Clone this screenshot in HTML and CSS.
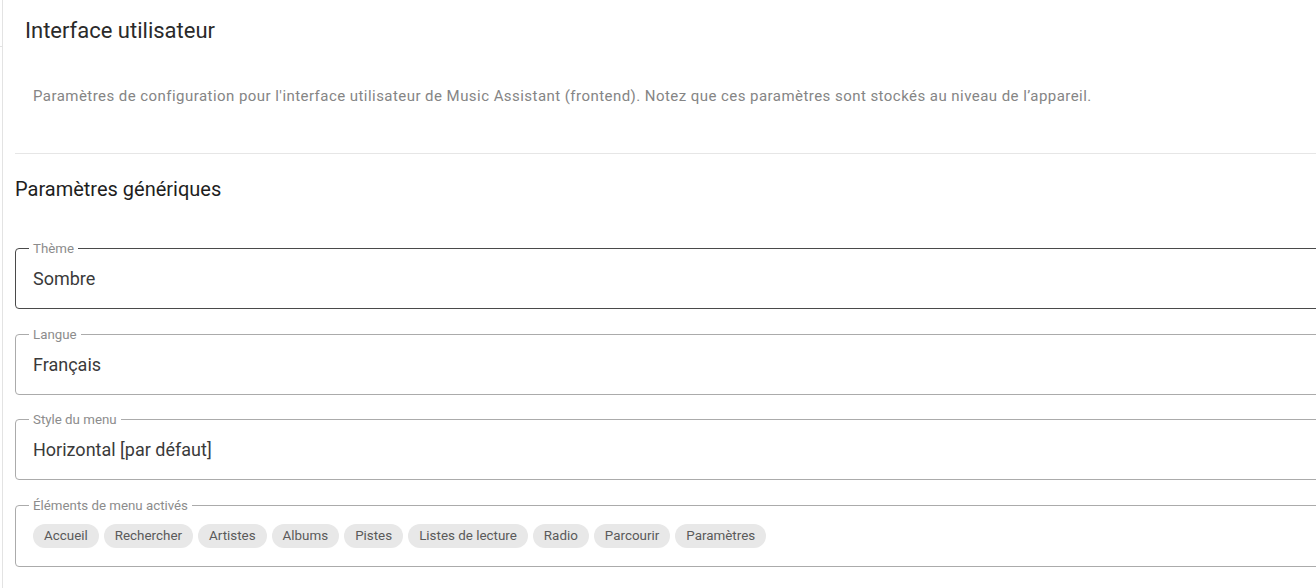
FILE: index.html
```html
<!DOCTYPE html>
<html lang="fr">
<head>
<meta charset="utf-8">
<title>Interface utilisateur</title>
<link rel="stylesheet" href="styles.css">
</head>
<body>
<div class="page">
    <div class="rail">
        <div class="rail-top"></div>
    </div>
    <div class="main">
        <div class="toolbar">Interface utilisateur</div>
        <p class="intro">Paramètres de configuration pour l'interface utilisateur de Music Assistant (frontend). Notez que ces paramètres sont stockés au niveau de l’appareil.</p>
        <div class="divider"></div>
        <h2 class="section">Paramètres génériques</h2>

        <fieldset class="field focused">
            <legend>Thème</legend>
            <div class="value">Sombre</div>
        </fieldset>
        <fieldset class="field">
            <legend>Langue</legend>
            <div class="value">Français</div>
        </fieldset>
        <fieldset class="field">
            <legend>Style du menu</legend>
            <div class="value">Horizontal [par défaut]</div>
        </fieldset>
        <fieldset class="field chips-field">
            <legend>Éléments de menu activés</legend>
            <div class="chips">
                <span class="chip">Accueil</span>
                <span class="chip">Rechercher</span>
                <span class="chip">Artistes</span>
                <span class="chip">Albums</span>
                <span class="chip">Pistes</span>
                <span class="chip">Listes de lecture</span>
                <span class="chip">Radio</span>
                <span class="chip">Parcourir</span>
                <span class="chip">Paramètres</span>
            </div>
        </fieldset>
    </div>
</div>
</body>
</html>
```

FILE: styles.css
```css
html, body {
    margin: 0;
    padding: 0;
    background: #fff;
    overflow: hidden;
}
body {
    font-family: Roboto, "Liberation Sans", sans-serif;
    color: #212121;
}
.page {
    display: flex;
    width: 1360px;
    min-height: 588px;
}
.rail {
    width: 2px;
    border-right: 1px solid #e3e3e3;
    flex: none;
}
.rail-top {
    height: 46px;
    border-bottom: 1px solid #e3e3e3;
}
.main {
    flex: 1;
    padding-left: 12px;
}
.toolbar {
    padding: 16px 0 0 10px;
    height: 30px;
    line-height: 30px;
    font-size: 22px;
    color: #2a2a2a;
}
.intro {
    margin: 40px 0 0 18px;
    font-size: 15px;
    line-height: 20px;
    letter-spacing: 0.45px;
    color: #858585;
}
.divider {
    height: 1px;
    background: #e6e6e6;
    margin-top: 47px;
}
.section {
    margin: 22px 0 0 0;
    font-size: 20px;
    font-weight: 400;
    line-height: 26px;
    color: #1e1e1e;
}
.field {
    margin: 17.5px 0 0 0;
    padding: 11px 17px 17px;
    border: 1px solid #ababab;
    border-radius: 4px;
}
.field.focused {
    border-color: #4a4a4a;
    margin-top: 39px;
}
.field legend {
    margin-left: -4px;
    padding: 0 4px;
    font-size: 13.3px;
    line-height: 15px;
    color: #8c8c8c;
}
.value {
    font-size: 18px;
    line-height: 24px;
    color: #3a3a3a;
}
.chips-field {
    padding-bottom: 18px;
}
.chips {
    display: flex;
    gap: 5px;
}
.chip {
    height: 24px;
    line-height: 24px;
    padding: 0 11px;
    border-radius: 12px;
    background: #e8e8e8;
    font-size: 13.4px;
    color: #5a5a5a;
}
```
